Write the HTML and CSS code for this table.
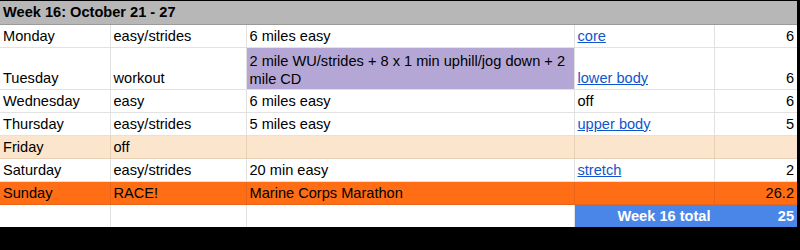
FILE: index.html
```html
<!DOCTYPE html>
<html>
<head>
<meta charset="utf-8">
<link rel="stylesheet" href="styles.css">
</head>
<body>
<div class="sheet">
<table class="plan">
  <colgroup>
    <col class="c1"><col class="c2"><col class="c3"><col class="c4"><col class="c5">
  </colgroup>
  <tr class="head"><td colspan="5">Week 16: October 21 - 27</td></tr>
  <tr><td>Monday</td><td>easy/strides</td><td>6 miles easy</td><td><a href="#">core</a></td><td class="num">6</td></tr>
  <tr class="tall"><td>Tuesday</td><td>workout</td><td class="purple">2 mile WU/strides + 8 x 1 min uphill/jog down + 2<br>mile CD</td><td><a href="#">lower body</a></td><td class="num">6</td></tr>
  <tr><td>Wednesday</td><td>easy</td><td>6 miles easy</td><td>off</td><td class="num">6</td></tr>
  <tr><td>Thursday</td><td>easy/strides</td><td>5 miles easy</td><td><a href="#">upper body</a></td><td class="num">5</td></tr>
  <tr class="peach"><td>Friday</td><td>off</td><td></td><td></td><td class="num"></td></tr>
  <tr><td>Saturday</td><td>easy/strides</td><td>20 min easy</td><td><a href="#">stretch</a></td><td class="num">2</td></tr>
  <tr class="orange"><td>Sunday</td><td>RACE!</td><td>Marine Corps Marathon</td><td></td><td class="num">26.2</td></tr>
  <tr class="total"><td></td><td></td><td></td><td class="blue num">Week 16 total</td><td class="blue num">25</td></tr>
</table>
</div>
</body>
</html>
```
FILE: styles.css
```css
html, body {
  margin: 0;
  padding: 0;
  background: #000;
}
.sheet {
  padding-top: 1px;
  width: 797px;
}
.plan {
  border-collapse: collapse;
  table-layout: fixed;
  width: 797px;
  background: #fff;
  font-family: "Liberation Sans", Arial, sans-serif;
  font-size: 14.6px;
  color: #000;
}
.c1 { width: 110px; }
.c2 { width: 136px; }
.c3 { width: 328px; }
.c4 { width: 140px; }
.c5 { width: 83px; }
.plan td {
  height: 23px;
  padding: 0 3px 2px 3px;
  line-height: 17px;
  vertical-align: bottom;
  border: 1px solid #e2e2e2;
  border-top: none;
  white-space: nowrap;
  overflow: hidden;
  box-sizing: border-box;
}
.plan td:first-child { border-left: none; }
.plan td:last-child { border-right: none; }
.plan tr.head td {
  height: 23px;
  background: #b7b7b7;
  font-weight: bold;
  border-bottom: 1px solid #9a9a9a;
  padding-bottom: 3px;
}
.plan tr.tall td { height: 42px; }
.plan td.purple {
  background: #b4a7d6;
  line-height: 18px;
  padding-bottom: 1px;
}
.plan td.num { text-align: right; }
.plan a {
  color: #1155cc;
  text-decoration: underline;
}
.plan tr.peach td {
  background: #fce5cd;
  border-color: #e8cfb6;
}
.plan tr.orange td {
  background: #ff6d14;
  border-color: #e8651a;
}
.plan td.blue {
  background: #4a86e8;
  color: #fff;
  font-weight: bold;
  border-color: #4a86e8;
}
.plan tr.total td { border-bottom: none; }
```
